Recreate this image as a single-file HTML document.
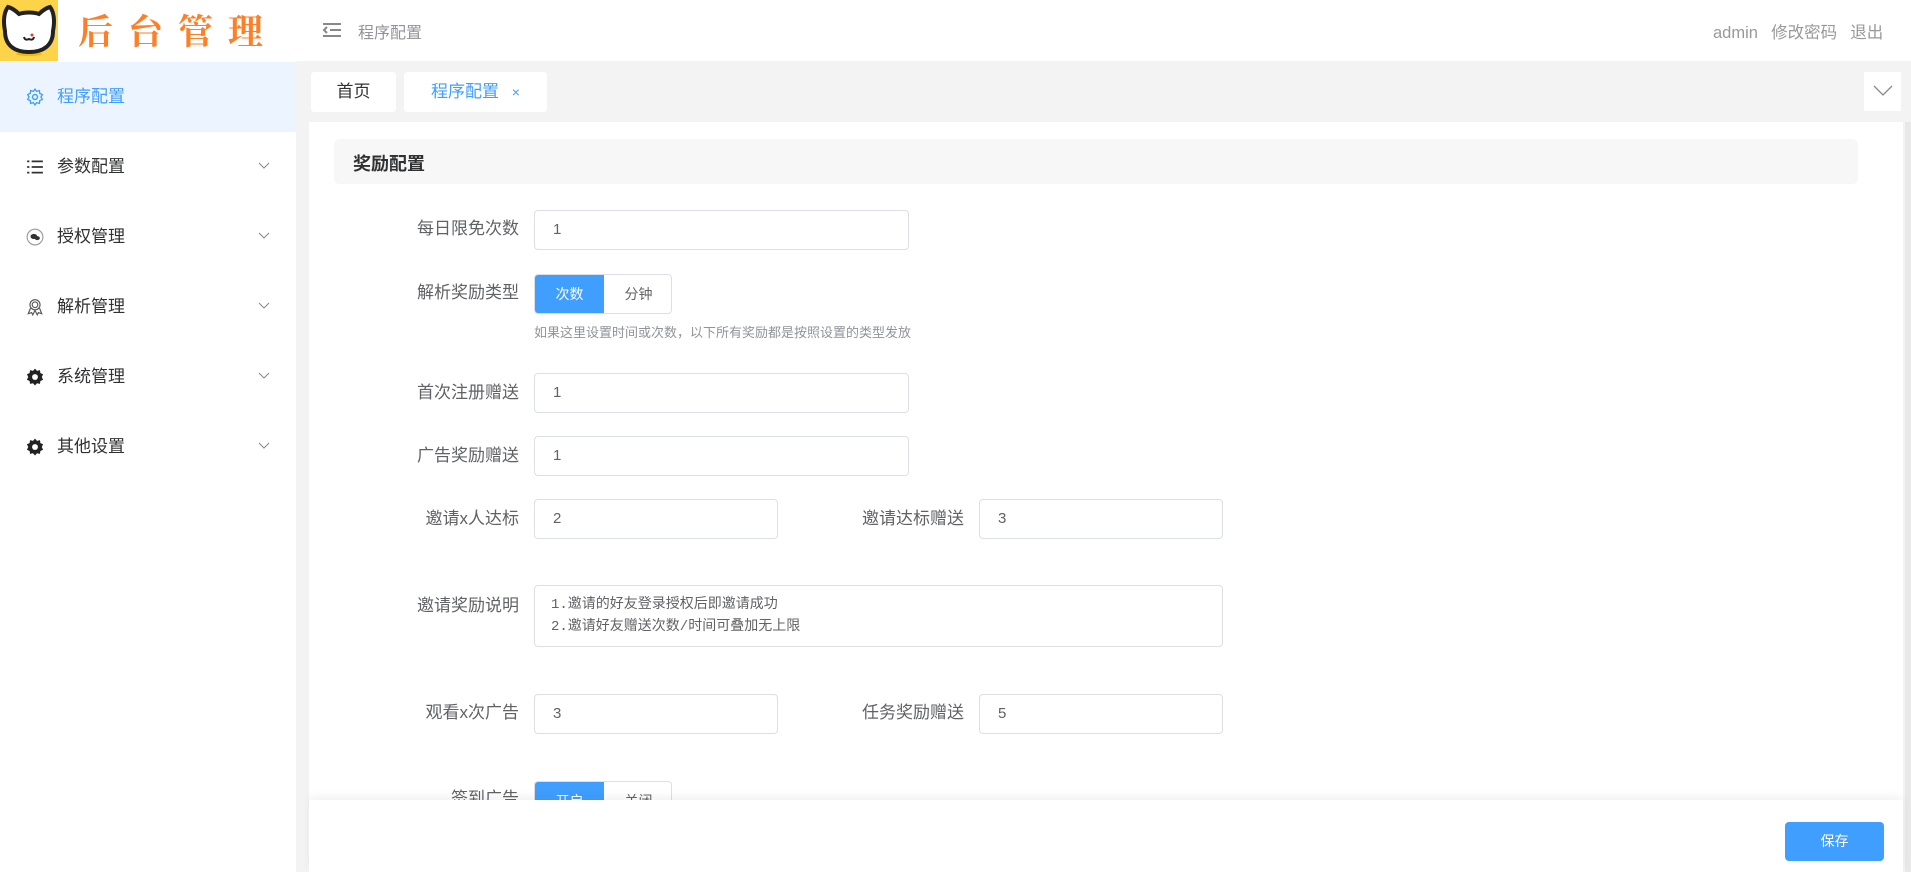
<!DOCTYPE html>
<html><head><meta charset="utf-8"><style>
*{box-sizing:border-box;margin:0;padding:0}
body{width:1911px;height:872px;overflow:hidden;font-family:"Liberation Sans","Noto Sans CJK SC",sans-serif;background:#fff;position:relative;color:#606266}
.abs{position:absolute}
.hdr{left:0;top:0;width:1911px;height:61px;background:#fff}
.logo{left:0;top:0;width:58px;height:61px;background:#fdd34a}
.title{left:78px;top:6px;font-family:"Noto Serif CJK SC",serif;font-weight:bold;font-size:35px;color:#ff7f27;letter-spacing:15px;line-height:48px}
.side{left:0;top:61px;width:296px;height:811px;background:#fff}
.item{position:absolute;left:0;width:296px;height:70px;font-size:17px;color:#303133;line-height:70px}
.item .t{position:absolute;left:57px}
.item .ic{position:absolute;left:26px;top:26px;width:18px;height:18px}
.item .chev{position:absolute;left:258px;top:30px}
.main{left:296px;top:61px;width:1615px;height:811px;background:#f3f3f3}
.tab{top:72px;height:40px;background:#fff;border-radius:3px;font-size:17px;line-height:40px;text-align:center}
.card{left:309px;top:122px;width:1594px;height:750px;background:#fff}
.lbl{font-size:17px;color:#606266;text-align:right;width:200px;line-height:20px}
.inp{border:1px solid #dcdfe6;border-radius:4px;background:#fff;font-size:15px;color:#606266;padding-left:18px;height:40px;line-height:38px}
</style></head><body>
<div class="abs hdr"></div>
<div class="abs logo">
<svg width="58" height="61" viewBox="0 0 58 61"><ellipse cx="29" cy="54" rx="13" ry="2" fill="#f5b800"/><path d="M5 31 C3 21 4 12 8 7 C12 8 16 11 19 14 C25 12 33 12 39 14 C42 11 46 8 50 7 C54 12 55 21 53 31 C53 45 44 52 29 52 C14 52 5 45 5 31Z" fill="#fff" stroke="#222" stroke-width="4"/><path d="M24 37 q1 4 5 2 q4 2 5 -2" stroke="#222" stroke-width="2" fill="none"/><circle cx="32" cy="35" r="1.5" fill="#e33"/></svg>
</div>
<div class="abs title">后台管理</div>
<svg class="abs" style="left:321px;top:21px" width="22" height="18" viewBox="0 0 22 18"><path d="M2 3h18M9 9h11M2 15h18M6 6l-3 3 3 3" stroke="#888" stroke-width="2" fill="none"/></svg>
<div class="abs" style="left:358px;top:19px;font-size:16px;color:#909399">程序配置</div>
<div class="abs" style="left:1713px;top:19px;font-size:16.5px;color:#999;word-spacing:2px">admin&nbsp;&nbsp;修改密码&nbsp;&nbsp;退出</div>

<div class="abs side">
<div class="item" style="top:1px;background:#ecf5ff;color:#409eff"><svg class="ic" viewBox="0 0 16 16"><circle cx="8" cy="8" r="2.2" fill="none" stroke="#409eff" stroke-width="1.3"/><path d="M8 1l1.5 2 2.4-.7.3 2.5 2.3 1-1.2 2.2 1.2 2.2-2.3 1-.3 2.5-2.4-.7L8 15l-1.5-2-2.4.7-.3-2.5-2.3-1L2.7 8 1.5 5.8l2.3-1 .3-2.5 2.4.7z" fill="none" stroke="#409eff" stroke-width="1.2"/></svg><span class="t">程序配置</span></div>
<div class="item" style="top:71px"><svg class="ic" viewBox="0 0 16 16"><path d="M1 3h2M1 8h2M1 13h2M5 3h10M5 8h10M5 13h10" stroke="#333" stroke-width="1.6"/></svg><span class="t">参数配置</span><svg class="chev" width="12" height="8"><path d="M1 1l5 5 5-5" stroke="#888" fill="none"/></svg></div>
<div class="item" style="top:141px"><svg class="ic" viewBox="0 0 16 16"><circle cx="8" cy="8" r="7" fill="none" stroke="#999"/><ellipse cx="7" cy="7.5" rx="3" ry="2.3" fill="#333"/><ellipse cx="10" cy="9" rx="2.3" ry="1.8" fill="#333"/></svg><span class="t">授权管理</span><svg class="chev" width="12" height="8"><path d="M1 1l5 5 5-5" stroke="#888" fill="none"/></svg></div>
<div class="item" style="top:211px"><svg class="ic" viewBox="0 0 16 16"><circle cx="8" cy="6" r="4.5" fill="none" stroke="#555"/><circle cx="8" cy="6" r="2.5" fill="none" stroke="#555"/><path d="M4 9l-2 5 3-1 1 2 2-4M12 9l2 5-3-1-1 2-2-4" fill="none" stroke="#555"/></svg><span class="t">解析管理</span><svg class="chev" width="12" height="8"><path d="M1 1l5 5 5-5" stroke="#888" fill="none"/></svg></div>
<div class="item" style="top:281px"><svg class="ic" viewBox="0 0 16 16"><path d="M8 0.5l1.8 2 2.6-.6.4 2.6 2.4 1.1L14 8l1.2 2.4-2.4 1.1-.4 2.6-2.6-.6L8 15.5l-1.8-2-2.6.6-.4-2.6-2.4-1.1L2 8 .8 5.6l2.4-1.1.4-2.6 2.6.6z" fill="#222"/><circle cx="8" cy="8" r="2.6" fill="#fff"/></svg><span class="t">系统管理</span><svg class="chev" width="12" height="8"><path d="M1 1l5 5 5-5" stroke="#888" fill="none"/></svg></div>
<div class="item" style="top:351px"><svg class="ic" viewBox="0 0 16 16"><path d="M8 0.5l1.8 2 2.6-.6.4 2.6 2.4 1.1L14 8l1.2 2.4-2.4 1.1-.4 2.6-2.6-.6L8 15.5l-1.8-2-2.6.6-.4-2.6-2.4-1.1L2 8 .8 5.6l2.4-1.1.4-2.6 2.6.6z" fill="#222"/><circle cx="8" cy="8" r="2.6" fill="#fff"/></svg><span class="t">其他设置</span><svg class="chev" width="12" height="8"><path d="M1 1l5 5 5-5" stroke="#888" fill="none"/></svg></div>
</div>

<div class="abs main"></div>
<div class="abs tab" style="left:311px;width:85px;color:#303133">首页</div>
<div class="abs tab" style="left:404px;width:143px;color:#409eff">程序配置 <span style="font-size:14px;margin-left:8px">×</span></div>
<div class="abs" style="left:1864px;top:72px;width:37px;height:39px;background:#fff"><svg style="margin:13px 0 0 9px" width="20" height="12"><path d="M1 1l9 9 9-9" stroke="#888" fill="none" stroke-width="1.3"/></svg></div>
<div class="abs" style="left:1905px;top:122px;width:6px;height:750px;background:#e8e8e8"></div>

<div class="abs card"></div>
<div class="abs" style="left:334px;top:139px;width:1524px;height:45px;background:#f7f7f7;border-radius:6px"></div>
<div class="abs" style="left:353px;top:150px;font-size:18px;font-weight:bold;color:#303133">奖励配置</div>

<div class="abs lbl" style="left:319px;top:219px">每日限免次数</div>
<div class="abs inp" style="left:534px;top:210px;width:375px">1</div>

<div class="abs lbl" style="left:319px;top:283px">解析奖励类型</div>
<div class="abs" style="left:534px;top:274px;width:138px;height:40px;border:1px solid #dcdfe6;border-radius:4px;overflow:hidden;font-size:14px">
<div style="position:absolute;left:0;top:0;width:69px;height:40px;background:#409eff;color:#fff;text-align:center;line-height:38px">次数</div>
<div style="position:absolute;left:69px;top:0;width:69px;text-align:center;line-height:38px;color:#606266">分钟</div></div>
<div class="abs" style="left:534px;top:322px;font-size:13px;color:#909399">如果这里设置时间或次数，以下所有奖励都是按照设置的类型发放</div>

<div class="abs lbl" style="left:319px;top:383px">首次注册赠送</div>
<div class="abs inp" style="left:534px;top:373px;width:375px">1</div>
<div class="abs lbl" style="left:319px;top:446px">广告奖励赠送</div>
<div class="abs inp" style="left:534px;top:436px;width:375px">1</div>

<div class="abs lbl" style="left:319px;top:509px">邀请x人达标</div>
<div class="abs inp" style="left:534px;top:499px;width:244px">2</div>
<div class="abs lbl" style="left:764px;top:509px">邀请达标赠送</div>
<div class="abs inp" style="left:979px;top:499px;width:244px">3</div>

<div class="abs lbl" style="left:319px;top:596px">邀请奖励说明</div>
<div class="abs inp" style="left:534px;top:585px;width:689px;height:62px;line-height:22px;padding-top:8px;padding-left:16px;font-family:'Liberation Mono','Noto Sans CJK SC',monospace;font-size:14px">1.邀请的好友登录授权后即邀请成功<br>2.邀请好友赠送次数/时间可叠加无上限</div>

<div class="abs lbl" style="left:319px;top:703px">观看x次广告</div>
<div class="abs inp" style="left:534px;top:694px;width:244px">3</div>
<div class="abs lbl" style="left:764px;top:703px">任务奖励赠送</div>
<div class="abs inp" style="left:979px;top:694px;width:244px">5</div>

<div class="abs lbl" style="left:319px;top:789px">签到广告</div>
<div class="abs" style="left:534px;top:781px;width:138px;height:40px;border:1px solid #dcdfe6;border-radius:4px;overflow:hidden;font-size:14px">
<div style="position:absolute;left:0;top:0;width:69px;height:40px;background:#409eff;color:#fff;text-align:center;line-height:38px">开启</div>
<div style="position:absolute;left:69px;top:0;width:69px;text-align:center;line-height:38px">关闭</div></div>

<div class="abs" style="left:309px;top:800px;width:1594px;height:72px;background:#fff;box-shadow:0 -4px 8px rgba(0,0,0,0.05)"></div>
<div class="abs" style="left:1785px;top:822px;width:99px;height:39px;background:#409eff;border-radius:4px;color:#fff;font-size:14px;text-align:center;line-height:39px">保存</div>
</body></html>
